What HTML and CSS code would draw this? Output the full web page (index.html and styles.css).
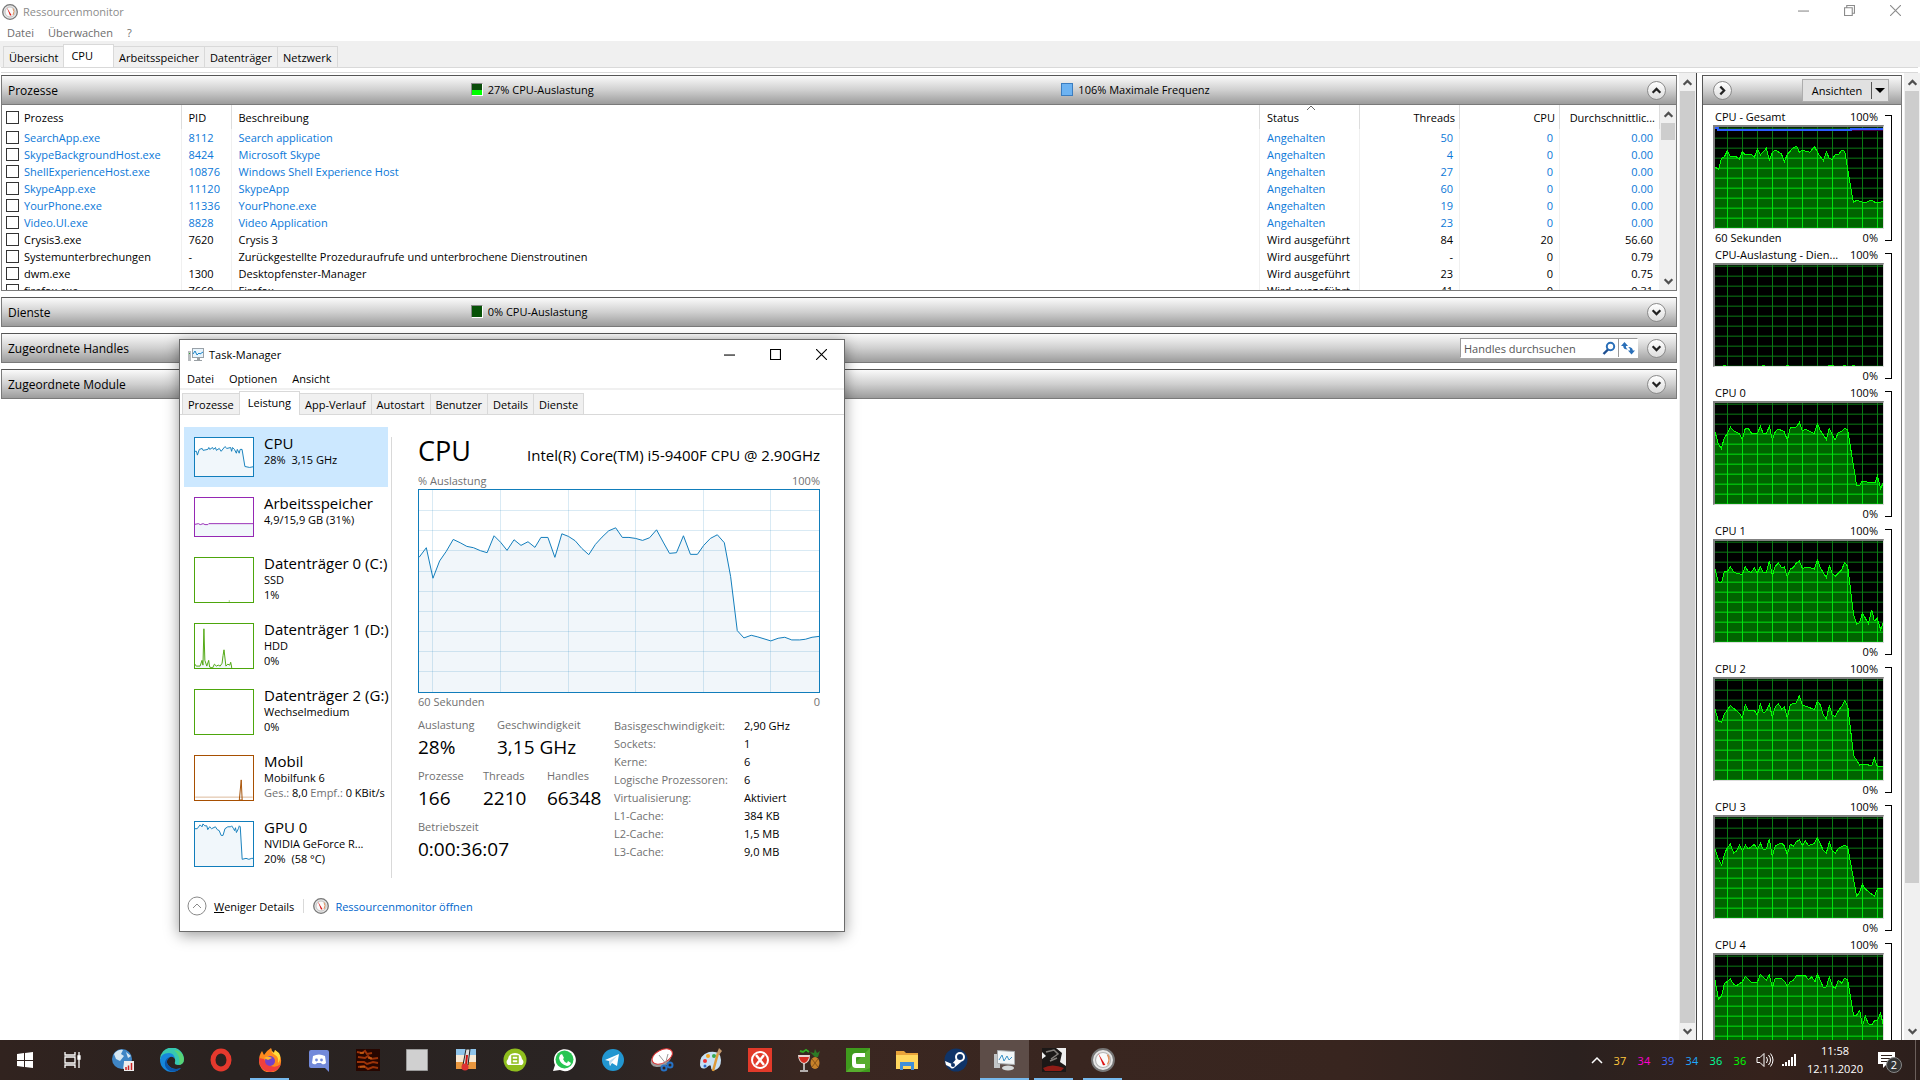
FILE: index.html
```html
<!DOCTYPE html>
<html lang="de">
<head>
<meta charset="utf-8">
<title>Ressourcenmonitor</title>
<link rel="stylesheet" href="styles.css">
</head>
<body>
<svg class="defs" aria-hidden="true">
  <defs>
    <pattern id="grid" x="36" y="32" width="45" height="30" patternUnits="userSpaceOnUse"><rect width="45" height="30" fill="#000"/><path d="M0 0h45v3H3v27H0z" fill="#0a7a14"/></pattern>
    <pattern id="load" x="36" y="32" width="45" height="30" patternUnits="userSpaceOnUse"><rect width="45" height="30" fill="#006400"/><path d="M0 0h45v3H3v27H0z" fill="#00e10f"/></pattern>
    <symbol id="gauge" viewBox="0 0 16 16"><circle cx="8" cy="8" r="7.3" fill="#e6e6e6" stroke="#777" stroke-width="1.3"/><circle cx="8" cy="8" r="5" fill="#fafafa" stroke="#b5b5b5" stroke-width=".8"/><path d="M4.8 3.5l4.8 7.8-1.6.2z" fill="#d11"/><path d="M11 4.500q2 3 0 6.500" fill="none" stroke="#e0915c"/></symbol>
    <symbol id="monitor" viewBox="0 0 16 16"><rect x="4.500" y="1.500" width="11" height="9" fill="#e8f4fc" stroke="#99a1a8"/><path d="M5 7l2-3 2 4 2-2 1 1 3-2" fill="none" stroke="#1b84c9"/><path d="M9 11h3v2h2v1H6v-1h3z" fill="#9aa0a4"/><path d="M0 4h3v10H0z" fill="#b8bcbf"/><path d="M1 6h1v1H1z" fill="#2ea22e"/></symbol>
    <symbol id="up" viewBox="0 0 10 10"><path d="M1.500 7L5 3.500 8.500 7" fill="none" stroke="currentColor" stroke-width="2"/></symbol>
    <symbol id="down" viewBox="0 0 10 10"><path d="M1.500 3L5 6.500 8.500 3" fill="none" stroke="currentColor" stroke-width="2"/></symbol>
    <symbol id="right" viewBox="0 0 10 10"><path d="M3 1.500L6.500 5 3 8.500" fill="none" stroke="currentColor" stroke-width="2"/></symbol>
  </defs>
</svg>

<main class="desktop">
  <section class="resmon">
    <header class="titlebar">
      <svg class="app-icon"><use href="#gauge"/></svg>
      <h1>Ressourcenmonitor</h1>
      <div class="controls">
        <button aria-label="Minimieren"><svg viewBox="0 0 10 10"><path d="M0 5.500h10"/></svg></button>
        <button aria-label="Wiederherstellen"><svg viewBox="0 0 10 10"><path d="M.5 2.500h7v7h-7zM2.500 2.500v-2h7v7h-2"/></svg></button>
        <button aria-label="Schließen"><svg viewBox="0 0 10 10"><path d="M0 0l10 10M10 0L0 10"/></svg></button>
      </div>
    </header>
    <nav class="menu"><button>Datei</button><button>Überwachen</button><button>?</button></nav>
    <div class="tabs"><button>Übersicht</button><button class="active">CPU</button><button>Arbeitsspeicher</button><button>Datenträger</button><button>Netzwerk</button></div>
    <div class="tab-edge"></div>
    <div class="body">
      <div class="panels">
        <section class="panel">
          <div class="panel-head">
            <h2>Prozesse</h2>
            <span class="meter"><i class="swatch busy"></i>27% CPU-Auslastung</span>
            <span class="meter"><i class="swatch freq"></i>106% Maximale Frequenz</span>
            <button class="round" aria-label="Einklappen"><svg><use href="#up"/></svg></button>
          </div>
          <div class="grid-wrap">
            <table class="procs">
              <colgroup><col class="c-name"><col class="c-pid"><col><col class="c-num"><col class="c-num"><col class="c-num"><col class="c-num"></colgroup>
              <thead><tr><th><label><input type="checkbox">Prozess</label></th><th>PID</th><th>Beschreibung</th><th class="sorted">Status<svg class="sort" viewBox="0 0 10 5"><path d="M1 5l4-4 4 4"/></svg></th><th class="num">Threads</th><th class="num">CPU</th><th class="num">Durchschnittlic...</th></tr></thead>
              <tbody>
                <tr class="paused"><td><label><input type="checkbox">SearchApp.exe</label></td><td>8112</td><td>Search application</td><td>Angehalten</td><td class="num">50</td><td class="num">0</td><td class="num">0.00</td></tr>
                <tr class="paused"><td><label><input type="checkbox">SkypeBackgroundHost.exe</label></td><td>8424</td><td>Microsoft Skype</td><td>Angehalten</td><td class="num">4</td><td class="num">0</td><td class="num">0.00</td></tr>
                <tr class="paused"><td><label><input type="checkbox">ShellExperienceHost.exe</label></td><td>10876</td><td>Windows Shell Experience Host</td><td>Angehalten</td><td class="num">27</td><td class="num">0</td><td class="num">0.00</td></tr>
                <tr class="paused"><td><label><input type="checkbox">SkypeApp.exe</label></td><td>11120</td><td>SkypeApp</td><td>Angehalten</td><td class="num">60</td><td class="num">0</td><td class="num">0.00</td></tr>
                <tr class="paused"><td><label><input type="checkbox">YourPhone.exe</label></td><td>11336</td><td>YourPhone.exe</td><td>Angehalten</td><td class="num">19</td><td class="num">0</td><td class="num">0.00</td></tr>
                <tr class="paused"><td><label><input type="checkbox">Video.UI.exe</label></td><td>8828</td><td>Video Application</td><td>Angehalten</td><td class="num">23</td><td class="num">0</td><td class="num">0.00</td></tr>
                <tr><td><label><input type="checkbox">Crysis3.exe</label></td><td>7620</td><td>Crysis 3</td><td>Wird ausgeführt</td><td class="num">84</td><td class="num">20</td><td class="num">56.60</td></tr>
                <tr><td><label><input type="checkbox">Systemunterbrechungen</label></td><td>-</td><td>Zurückgestellte Prozeduraufrufe und unterbrochene Dienstroutinen</td><td>Wird ausgeführt</td><td class="num">-</td><td class="num">0</td><td class="num">0.79</td></tr>
                <tr><td><label><input type="checkbox">dwm.exe</label></td><td>1300</td><td>Desktopfenster-Manager</td><td>Wird ausgeführt</td><td class="num">23</td><td class="num">0</td><td class="num">0.75</td></tr>
                <tr><td><label><input type="checkbox">firefox.exe</label></td><td>7660</td><td>Firefox</td><td>Wird ausgeführt</td><td class="num">41</td><td class="num">0</td><td class="num">0.31</td></tr>
              </tbody>
            </table>
            <div class="scroll inner"><svg><use href="#up"/></svg><div class="track"><div class="thumb short"></div></div><svg><use href="#down"/></svg></div>
          </div>
        </section>
        <section class="panel"><div class="panel-head"><h2>Dienste</h2><span class="meter"><i class="swatch idle"></i>0% CPU-Auslastung</span><span></span><button class="round" aria-label="Ausklappen"><svg><use href="#down"/></svg></button></div></section>
        <section class="panel"><div class="panel-head"><h2>Zugeordnete Handles</h2><span></span>
          <form class="search"><input type="text" placeholder="Handles durchsuchen" aria-label="Handles durchsuchen"><button type="button" aria-label="Suchen"><svg viewBox="0 0 14 14"><circle cx="8.500" cy="5.500" r="3.700" fill="none" stroke="#2a6fb8" stroke-width="2"/><path d="M6 8.500L1.500 13" stroke="#1e4f91" stroke-width="2.400"/></svg></button><button type="button" class="refresh" aria-label="Aktualisieren"><svg viewBox="0 0 14 14"><path d="M0 5l3.500-4L7 5H4.800q0 2.500 2 3.500Q2.200 8.500 2.200 5zM14 9.500l-3.500 4-3.500-4h2.200q0-2.500-2-3.500 4.600 0 4.600 3.500z" fill="#2a6fb8"/></svg></button></form>
          <button class="round" aria-label="Ausklappen"><svg><use href="#down"/></svg></button></div></section>
        <section class="panel"><div class="panel-head"><h2>Zugeordnete Module</h2><span></span><span></span><button class="round" aria-label="Ausklappen"><svg><use href="#down"/></svg></button></div></section>
      </div>
      <div class="scroll"><svg><use href="#up"/></svg><div class="track"><div class="thumb full"></div></div><svg><use href="#down"/></svg></div>
      <aside class="views">
        <div class="views-box">
          <div class="panel-head views-head"><button class="round" aria-label="Ausblenden"><svg><use href="#right"/></svg></button><button class="views-btn"><span>Ansichten</span><i></i></button></div>
          <div class="charts">
            <figure class="chart"><figcaption><span>CPU - Gesamt</span><b>100%</b></figcaption><svg viewBox="0 0 504 303" preserveAspectRatio="none"><rect width="504" height="303" fill="url(#grid)"/><path class="load" d="M-9 320V120L0 120 11 128 19 94 28 90 37 72 45 88 65 90 73 97 82 74 91 84 109 83 118 91 127 66 136 84 154 64 163 100 172 76 181 69 199 80 208 104 217 82 235 62 245 58 253 76 262 70 285 76 298 58 311 82 325 101 334 74 343 94 352 97 361 82 371 82 380 70 389 73 415 226 425 220 451 228 468 219 480 226 520 224V320z"/><path d="M408 9h96" stroke="#400040" stroke-width="6"/><path d="M0 4h10v5h398V5h96" fill="none" stroke="#2b5cff" stroke-width="6"/></svg><footer><span>60 Sekunden</span><b>0%</b></footer></figure>
            <figure class="chart"><figcaption><span>CPU-Auslastung - Dien...</span><b>100%</b></figcaption><svg viewBox="0 0 504 303" preserveAspectRatio="none"><rect width="504" height="303" fill="url(#grid)"/><path d="M25 301h9M142 301h9M214 301h9M340 301h18M385 301h9M412 301h9" stroke="#0f0" stroke-width="3"/></svg><footer><span></span><b>0%</b></footer></figure>
            <figure class="chart"><figcaption><span>CPU 0</span><b>100%</b></figcaption><svg viewBox="0 0 504 303" preserveAspectRatio="none"><rect width="504" height="303" fill="url(#grid)"/><path class="load" d="M-9 320V86L0 86 9 120 19 137 28 104 37 92 46 72 56 84 73 92 82 110 91 76 100 76 109 90 127 92 136 70 145 92 154 92 163 70 172 110 181 86 190 78 208 86 217 112 226 74 244 72 253 58 262 84 271 78 298 92 307 62 316 82 334 110 343 76 360 112 370 88 380 86 389 76 398 80 425 248 434 248 442 234 460 238 480 240 487 218 497 258 504 240 520 240V320z"/></svg><footer><span></span><b>0%</b></footer></figure>
            <figure class="chart"><figcaption><span>CPU 1</span><b>100%</b></figcaption><svg viewBox="0 0 504 303" preserveAspectRatio="none"><rect width="504" height="303" fill="url(#grid)"/><path class="load" d="M-9 320V83L0 83 10 124 20 124 28 92 37 92 46 77 56 92 65 98 82 100 91 77 100 92 109 94 118 80 127 96 136 77 145 94 154 94 163 60 172 104 181 76 190 66 200 80 208 78 217 108 226 84 235 80 244 66 253 60 262 82 280 78 298 84 307 56 316 80 334 110 343 74 352 98 361 106 370 96 380 86 389 65 398 76 416 222 425 250 434 245 442 215 460 248 470 206 478 240 487 232 497 266 504 246 520 246V320z"/></svg><footer><span></span><b>0%</b></footer></figure>
            <figure class="chart"><figcaption><span>CPU 2</span><b>100%</b></figcaption><svg viewBox="0 0 504 303" preserveAspectRatio="none"><rect width="504" height="303" fill="url(#grid)"/><path class="load" d="M-9 320V90L0 90 10 126 20 130 28 106 37 92 46 80 56 88 73 102 82 118 91 78 100 96 118 94 127 108 136 76 145 102 154 96 163 76 172 114 181 84 190 74 200 90 208 84 217 118 226 76 244 72 253 50 262 78 280 84 298 92 307 66 316 78 325 108 334 120 343 80 352 110 361 112 370 96 380 82 389 66 398 80 416 230 434 258 451 256 470 260 478 238 487 262 504 262 520 262V320z"/></svg><footer><span></span><b>0%</b></footer></figure>
            <figure class="chart"><figcaption><span>CPU 3</span><b>100%</b></figcaption><svg viewBox="0 0 504 303" preserveAspectRatio="none"><rect width="504" height="303" fill="url(#grid)"/><path class="load" d="M-9 320V96L0 96 9 122 20 144 28 112 37 92 46 82 56 108 65 102 73 84 82 102 91 84 100 96 118 82 127 98 136 78 145 98 154 96 163 66 172 118 181 86 200 78 208 86 217 112 226 82 235 88 244 74 253 69 262 86 271 72 280 86 298 80 307 62 325 100 334 108 343 76 352 102 361 108 370 94 389 84 398 90 425 238 434 226 442 200 451 216 478 238 487 216 504 214 520 214V320z"/></svg><footer><span></span><b>0%</b></footer></figure>
            <figure class="chart"><figcaption><span>CPU 4</span><b>100%</b></figcaption><svg viewBox="0 0 504 303" preserveAspectRatio="none"><rect width="504" height="303" fill="url(#grid)"/><path class="load" d="M-9 320V74L0 74 10 132 20 122 28 86 46 72 56 88 65 92 82 80 91 64 109 82 127 82 136 58 154 76 163 60 172 98 181 70 200 72 208 78 217 94 226 80 235 76 244 62 262 60 271 62 280 74 290 66 300 80 307 56 325 98 334 96 343 66 352 94 361 100 370 76 380 84 389 70 398 74 416 182 425 180 434 166 442 214 451 184 460 206 470 210 478 198 487 196 497 174 504 208 520 208V320z"/></svg><footer><span></span><b>0%</b></footer></figure>
          </div>
        </div>
      </aside>
      <div class="scroll outer"><svg><use href="#up"/></svg><div class="track"><div class="thumb part"></div></div><svg><use href="#down"/></svg></div>
    </div>
  </section>

  <section class="taskman">
    <header class="titlebar">
      <svg class="app-icon"><use href="#monitor"/></svg>
      <h1>Task-Manager</h1>
      <div class="controls">
        <button aria-label="Minimieren"><svg viewBox="0 0 10 10"><path d="M0 5.500h10"/></svg></button>
        <button aria-label="Maximieren"><svg viewBox="0 0 10 10"><path d="M.5.5h9v9h-9z"/></svg></button>
        <button aria-label="Schließen"><svg viewBox="0 0 10 10"><path d="M0 0l10 10M10 0L0 10"/></svg></button>
      </div>
    </header>
    <nav class="menu"><button>Datei</button><button>Optionen</button><button>Ansicht</button></nav>
    <div class="tabs"><button>Prozesse</button><button class="active">Leistung</button><button>App-Verlauf</button><button>Autostart</button><button>Benutzer</button><button>Details</button><button>Dienste</button></div>
    <div class="perf">
      <ul class="devices">
        <li class="selected"><svg class="thumbnail blue" viewBox="0 0 60 40"><path d="M-2 42V14h3l1 4 2-6 3-1 1 2 5-1 1-2 1 2 3-2 1 2 2-2 1 3 3-2 2 3 4-5 2 2 4-1 1 4 1-4 2 2 2 4 1-4 2 4 1-4h2l3 18 5 1 5-1h5v15z"/></svg><div><h3>CPU</h3><p>28%&nbsp; 3,15 GHz</p></div></li>
        <li><svg class="thumbnail purple" viewBox="0 0 60 40"><path d="M-2 42V28l5-1 2 1 3-1 2 1h3l1-1h50v15z"/></svg><div><h3>Arbeitsspeicher</h3><p>4,9/15,9 GB (31%)</p></div></li>
        <li><svg class="thumbnail green" viewBox="0 0 60 46"><path d="M35 45h1"/></svg><div><h3>Datenträger 0 (C:)</h3><p>SSD</p><p>1%</p></div></li>
        <li><svg class="thumbnail green" viewBox="0 0 60 46"><path d="M-2 48V40l3 4h4l2-6 1 5 1-38 1 33 2 6 2-6 1 7 3 1 2-4 2 2 2-1 2 1 2-3 1-8 1-6 2 17 2-2 2 1 1-3 1 5v6z"/></svg><div><h3>Datenträger 1 (D:)</h3><p>HDD</p><p>0%</p></div></li>
        <li><svg class="thumbnail green" viewBox="0 0 60 46"></svg><div><h3>Datenträger 2 (G:)</h3><p>Wechselmedium</p><p>0%</p></div></li>
        <li><svg class="thumbnail brown" viewBox="0 0 60 46"><path d="M0 43h60" opacity=".4"/><path d="M46 46l2-21 1 21z"/></svg><div><h3>Mobil</h3><p>Mobilfunk 6</p><p><span>Ges.:</span> 8,0 <span>Empf.:</span> 0 KBit/s</p></div></li>
        <li><svg class="thumbnail blue" viewBox="0 0 60 46"><path d="M-2 48V7l4 0 3-4 2 2 1-3 2 2h2l1 4 2-3 2 2 4-2 2 3 2 1 2 5h2l2-7 3-2 3 0 1-1 2 3 1 2 1-3 1 5 2-4 1-3 1 1 2 34 4-1 3 1 3-1h3v14z"/></svg><div><h3>GPU 0</h3><p>NVIDIA GeForce R...</p><p>20%&nbsp; (58 °C)</p></div></li>
      </ul>
      <div class="detail">
        <div class="detail-head"><h2>CPU</h2><span>Intel(R) Core(TM) i5-9400F CPU @ 2.90GHz</span></div>
        <div class="axis"><span>% Auslastung</span><span>100%</span></div>
        <svg class="graph" viewBox="55 179 1204 609" preserveAspectRatio="none"><path class="area" d="M50 800V385L56 381 77 353 97 445 117 393 137 364 158 328 179 338 199 349 219 353 240 362 260 368 281 317 301 337 320 361 341 329 362 346 383 335 404 352 422 322 443 322 464 382 485 311 505 319 525 332 545 355 566 374 586 343 606 321 626 302 647 293 667 322 687 322 707 325 728 331 749 323 770 299 790 336 809 370 830 368 851 317 872 373 893 373 912 346 932 325 953 314 974 338 993 440 1013 603 1033 625 1055 617 1075 622 1114 634 1136 626 1156 623 1177 631 1201 631 1218 629 1238 623 1270 619V800z"/><path class="mesh" d="M97 179v609M301 179v609M505 179v609M706 179v609M910 179v609M1114 179v609M55 240h1204M55 301h1204M55 361h1204M55 424h1204M55 484h1204M55 544h1204M55 607h1204M55 667h1204M55 727h1204"/></svg>
        <div class="axis"><span>60 Sekunden</span><span>0</span></div>
        <div class="stats">
          <div class="big">
            <dl class="two"><div><dt>Auslastung</dt><dd>28%</dd></div><div><dt>Geschwindigkeit</dt><dd>3,15 GHz</dd></div></dl>
            <dl class="three"><div><dt>Prozesse</dt><dd>166</dd></div><div><dt>Threads</dt><dd>2210</dd></div><div><dt>Handles</dt><dd>66348</dd></div></dl>
            <dl><div><dt>Betriebszeit</dt><dd>0:00:36:07</dd></div></dl>
          </div>
          <table class="facts">
            <tr><th>Basisgeschwindigkeit:</th><td>2,90 GHz</td></tr>
            <tr><th>Sockets:</th><td>1</td></tr>
            <tr><th>Kerne:</th><td>6</td></tr>
            <tr><th>Logische Prozessoren:</th><td>6</td></tr>
            <tr><th>Virtualisierung:</th><td>Aktiviert</td></tr>
            <tr><th>L1-Cache:</th><td>384 KB</td></tr>
            <tr><th>L2-Cache:</th><td>1,5 MB</td></tr>
            <tr><th>L3-Cache:</th><td>9,0 MB</td></tr>
          </table>
        </div>
      </div>
    </div>
    <footer class="tm-foot"><button><svg class="fewer" viewBox="0 0 20 20"><circle cx="10" cy="10" r="9"/><path d="M6 12l4-4 4 4"/></svg><span><u>W</u>eniger Details</span></button><a href="#"><svg class="app-icon"><use href="#gauge"/></svg>Ressourcenmonitor öffnen</a></footer>
  </section>
</main>

<footer class="taskbar">
  <button aria-label="Start"><svg viewBox="0 0 24 24"><path fill="#fff" d="M4 6l7-1v7H4zM12 5l8-1v8h-8zM4 13h7v6l-7-1zM12 13h8v7l-8-1z"/></svg></button>
  <button aria-label="Taskansicht"><svg viewBox="0 0 24 24" fill="none" stroke="#fff" stroke-width="1.300"><path d="M3 4v3h10V4M3 20v-3h10v3M3 9h10v6H3zM17 4v16"/><path d="M16 8h2v3h-2z" fill="#fff"/></svg></button>
  <button aria-label="Netzwerk"><svg viewBox="0 0 24 24"><circle cx="11" cy="11" r="10" fill="#3f86c6"/><path d="M3 6q4-5 9-4l-2 4 3 2-4 5-4-2zM13 14l6-1-2 6-5 2zM15 4l5 4-3 2z" fill="#d7e8f3"/><path d="M13 13h10v10H13z" fill="#eee"/><path d="M15 19v3M17.500 17.500V22M20.500 15v7" stroke="#c22" stroke-width="1.500"/></svg></button>
  <button aria-label="Edge"><svg viewBox="0 0 24 24"><path d="M0 12A12 12 0 0 1 24 11q0 6-6 6-4 0-3-3 1-5-4-6-7 0-11 4z" fill="#37c8b0"/><path d="M0 12Q1 5 9 5q5 0 6 6-2-3-5-2-5 3-2 8 5 6 13 3-4 4-9 4A12 12 0 0 1 0 12z" fill="#1687dc"/><path d="M10 9q-5 3-2 8 5 6 13 3-5 5-11 3-6-3-5-9 1-4 5-5z" fill="#0b56ab"/><path d="M14 2q9 1 10 9 0 5-5 6 2-9-5-15z" fill="#67d95e" opacity=".7"/></svg></button>
  <button aria-label="Opera"><svg viewBox="0 0 24 24"><ellipse cx="12" cy="12" rx="8" ry="9" fill="none" stroke="#e5392d" stroke-width="5"/></svg></button>
  <button class="running" aria-label="Firefox"><svg viewBox="0 0 24 24"><path d="M1 13Q1 7 4 3l2 4q2-4 7-7 0 3 3 5l1-3q7 6 6 12a11 11 0 0 1-22-1z" fill="#ff8a1e"/><path d="M1 13q1 10 11 11 9-1 11-8-5 4-10 2T6 11l-5-1z" fill="#f0403c"/><path d="M13 0q0 5 4 7t3 8q4-5 1-10l-4-3-1 3q-3-2-3-5z" fill="#ffdc3e"/><circle cx="12" cy="13" r="5" fill="#7442c8"/><path d="M6 10q4-3 8 0l-4 2z" fill="#ffb52e"/></svg></button>
  <button aria-label="Discord"><svg viewBox="0 0 24 24"><path d="M2 4q0-2 2-2h16q2 0 2 2v20l-4-4H4q-2 0-2-2z" fill="#7289da"/><path d="M6 8q6-3 12 0l1 7q-2 2-4 1l-1-1h-4l-1 1q-2 1-4-1z" fill="#fff"/><circle cx="9.500" cy="12" r="1.400" fill="#7289da"/><circle cx="14.500" cy="12" r="1.400" fill="#7289da"/></svg></button>
  <button aria-label="Spiel"><svg viewBox="0 0 24 24"><path fill="#260600" d="M0 1h24v22H0z"/><path d="M1 4l5 1 3-2 2 3 5-1M2 9l7 1 3-2 3 3 7-1M1 14h7l3 2 6-2 5 1M2 19l6-1 4 3 5-2 5 1" fill="none" stroke="#9c3308" stroke-width="2"/><path d="M4 5h4M12 10h4M4 19h5" stroke="#e67b1d"/></svg></button>
  <button aria-label="Fenster"><svg viewBox="0 0 24 24"><path fill="#d0d0d0" stroke="#999" d="M1.500 1.500h21v21h-21z"/></svg></button>
  <button aria-label="Temperatur"><svg viewBox="0 0 24 24"><path fill="#e8963e" d="M2 1h20v20H2z"/><path fill="#8fc4ea" d="M2 1h20v7H2z"/><path fill="#f7e9d5" d="M2 7h20v7H2z"/><path d="M9 17L12 1h4l-2 16z" fill="#ddd" stroke="#222"/><path d="M12 17l1-10" stroke="#c11" stroke-width="2"/><circle cx="11" cy="19" r="3.500" fill="#d33"/></svg></button>
  <button aria-label="Cloud"><svg viewBox="0 0 24 24"><circle cx="12" cy="12" r="11.500" fill="#8fbe1e"/><path d="M5 17q-3-3 0-6 1-6 7-6t7 6q3 3 0 6z" fill="#fff"/><path d="M9 8h6v7H9zM9 11.500h6" fill="none" stroke="#8fbe1e" stroke-width="1.500"/></svg></button>
  <button aria-label="WhatsApp"><svg viewBox="0 0 24 24"><path d="M1 23l2-6A11 11 0 1 1 8 22z" fill="#fff"/><circle cx="12.500" cy="11.500" r="9" fill="#27c552"/><path d="M8 7l2-1 2 4-1 1q1 3 4 4l1-2 3 2q-1 3-4 3-7-2-8-8z" fill="#fff"/></svg></button>
  <button aria-label="Telegram"><svg viewBox="0 0 24 24"><circle cx="12" cy="12" r="11" fill="#2296d0"/><path d="M4 12l14-6-2 12-5-3-2 3-1-5z" fill="#fff"/><path d="M8 13l8-5-6 7-1 3z" fill="#bcdcf0"/></svg></button>
  <button aria-label="Snipping Tool"><svg viewBox="0 0 24 24"><ellipse cx="11" cy="11" rx="11" ry="7" transform="rotate(-28 11 11)" fill="#9d9d9d"/><ellipse cx="12" cy="8.500" rx="11" ry="6.500" transform="rotate(-28 12 8)" fill="#fff" stroke="#d33"/><path d="M9 7l8 10M18 6l-3 11" stroke="#999"/><circle cx="14" cy="20" r="2.500" fill="none" stroke="#2672c5" stroke-width="2"/><circle cx="20" cy="17" r="2.500" fill="none" stroke="#2672c5" stroke-width="2"/></svg></button>
  <button aria-label="Paint"><svg viewBox="0 0 24 24"><path d="M1 17Q0 7 10 4q12-2 12 8 0 8-6 10-4 1-4-3t-5 1q-5 2-6-3z" fill="#c7e1f5"/><circle cx="6" cy="13" r="2" fill="#e33"/><circle cx="9" cy="8" r="2" fill="#f5a623"/><circle cx="15" cy="8" r="2" fill="#36a852"/><circle cx="6" cy="18" r="1.500" fill="#2b69c9"/><path d="M14 23l5-18" stroke="#dd9a38" stroke-width="2.500"/><path d="M18 5l2-5 3 3-3 4z" fill="#c69a6d"/></svg></button>
  <button aria-label="Beenden"><svg viewBox="0 0 24 24"><path fill="#e23a2a" d="M0 0h24v24H0z"/><circle cx="12" cy="12" r="8" fill="none" stroke="#fff" stroke-width="2"/><path d="M8 7l8 10M16 7L8 17" stroke="#fff" stroke-width="2.400"/></svg></button>
  <button aria-label="Cocktail"><svg viewBox="0 0 24 24"><ellipse cx="18" cy="15" rx="4.500" ry="6" fill="#c7822a"/><path d="M18 9l-5-5 4 1 1-4 2 4 3-2-2 6z" fill="#2d7a26"/><path d="M1 7h12q0 8-6 9-6-2-6-9z" fill="#e9d5d0"/><path d="M2 9h10q-1 5-5 6-4-1-5-6z" fill="#d42d21"/><path d="M7 15v7M3 23h8" stroke="#ddd" stroke-width="1.500"/><path d="M3 3l3 1 3-2 3 2" stroke="#3a2" stroke-width="2"/><path d="M15 11l6 8M21 11l-6 8" stroke="#8e5617"/></svg></button>
  <button aria-label="Camtasia"><svg viewBox="0 0 24 24"><path fill="#3f9b1d" d="M0 0h24v24H0z"/><path d="M24 0v20L14 24H0z" fill="#6cbb3c" opacity=".55"/><path d="M19 5H10Q6 5 6 9v7q0 4 4 4h9v-4h-8q-1 0-1-1V10q0-1 1-1h8z" fill="#fff"/></svg></button>
  <button aria-label="Explorer"><svg viewBox="0 0 24 24"><path d="M1 3h8l2 2h12v16H1z" fill="#e8a33a"/><path d="M1 7h22v14H1z" fill="#ffd75e"/><path d="M5 22v-8h14v8h-3v-4H8v4z" fill="#3f8fd8"/></svg></button>
  <button aria-label="Steam"><svg viewBox="0 0 24 24"><circle cx="12" cy="12" r="11.500" fill="#0f3468"/><path d="M1 13l7 3 5-6 4 4-6 5q-3 3-5 0l-4-2z" fill="#fff"/><circle cx="16" cy="9" r="4" fill="#0f3468" stroke="#fff" stroke-width="2"/><circle cx="9" cy="17" r="2" fill="#0f3468"/></svg></button>
  <button class="running current" aria-label="Task-Manager"><svg viewBox="0 0 24 24"><path fill="#c2c5c7" d="M1 6h6v14H1z"/><path fill="#f2f6f8" stroke="#a9adb0" d="M4.500 2.500l17 1v13l-17-1z"/><path d="M6 12l3-5 2 6 3-5 2 4 3-3" fill="none" stroke="#3a93c8"/><ellipse cx="15" cy="20" rx="6" ry="2.500" fill="#d6d9da"/></svg></button>
  <button class="running" aria-label="Crysis 3"><svg viewBox="0 0 24 24"><path fill="#eee" d="M0 0h24v24H0z"/><path d="M0 0h14l6 5-2 9 6 4v6H0V11l4-3-4-4z" fill="#1b1817"/><path d="M4 4l8-2 4 4-7 5M8 13l7-3" fill="none" stroke="#85807c" stroke-width="1.500"/><path d="M1 20q9-5 21 0l-3 3H3z" fill="#8e1c16"/></svg></button>
  <button class="running" aria-label="Ressourcenmonitor"><svg viewBox="0 0 24 24"><use href="#gauge" width="24" height="24"/></svg></button>
  <div class="tray">
    <svg class="chev" viewBox="0 0 12 12"><path d="M1 9l5-5 5 5"/></svg>
    <span class="t1">37</span><span class="t2">34</span><span class="t3">39</span><span class="t4">34</span><span class="t5">36</span><span class="t6">36</span>
    <svg class="speaker" viewBox="0 0 18 16"><path d="M1 5.500h3l4-4v13l-4-4H1zM10.500 5q2 3 0 6M12.500 3q4 5 0 10M14.500 1.500q5 6.500 0 13"/></svg>
    <svg class="signal" viewBox="0 0 15 12"><path d="M0 10h2v2H0zM3 8h2v4H3zM6 6h2v6H6zM9 3h2v9H9zM12 0h2v12h-2z"/></svg>
    <div class="clock"><time>11:58</time><time>12.11.2020</time></div>
    <button class="notes" aria-label="Benachrichtigungen"><svg viewBox="0 0 20 18"><path d="M1 1h17v12h-8l-4 4v-4H1z" fill="#fff"/><path d="M4 4.500h11M4 7.500h11M4 10.500h7" stroke="#2e211d"/></svg><b>2</b></button>
    <i class="peek"></i>
  </div>
</footer>
</body>
</html>
```
FILE: styles.css
```css
* { box-sizing: border-box; }
body { margin: 0; height: 100vh; display: flex; flex-direction: column; overflow: hidden; background: #fff; color: #000; font: 11px/17px "Open Sans", "Noto Sans", sans-serif; }
h1, h2, h3, p, ul, dl, dd, figure { margin: 0; padding: 0; font-weight: 400; }
b { font-weight: 400; }
button { font: inherit; color: inherit; border: 0; padding: 0; background: none; white-space: nowrap; }
input { font: inherit; }
svg { display: block; flex: none; }
.defs { position: absolute; width: 0; height: 0; }
.desktop { flex: 1; min-height: 0; position: relative; display: flex; }
.resmon { flex: 1; min-width: 0; display: flex; flex-direction: column; }

/* window frames */
.titlebar { display: flex; align-items: center; }
.titlebar h1 { flex: 1; font-size: 11px; }
.app-icon { width: 16px; height: 16px; }
.controls { display: flex; }
.controls button { width: 46px; display: grid; place-items: center; }
.controls svg { width: 11px; height: 11px; fill: none; stroke: currentColor; stroke-width: 1; }
.resmon > .titlebar { height: 23px; padding-left: 2px; gap: 5px; color: #8c8c8c; }
.resmon > .titlebar .controls { align-self: flex-start; padding: 5px 2px 0 0; }
.menu { display: flex; align-items: center; }
.resmon > .menu { height: 18px; padding-left: 7px; gap: 14px; color: #6d6d6d; }
.tabs { display: flex; align-items: flex-end; }
.tabs button { height: 21px; padding: 0 5px; background: #f0f0f0; border: 1px solid #d9d9d9; border-bottom: 0; margin-right: -1px; }
.tabs .active { background: #fff; height: 23px; padding-bottom: 2px; }
.resmon > .tabs { height: 26px; padding-left: 3px; background: #f0f0f0; flex: none; }
.resmon > .tabs .active { padding: 0 20px 2px 7px; }
.tab-edge { flex: none; height: 6px; border: solid #d9d9d9; border-width: 1px 0; background: #fff; margin: 0 2px 0 1px; }

/* resource monitor */
.body { flex: 1; min-height: 0; display: flex; }
.panels { flex: 1; min-width: 0; padding: 2px 2px 0 1px; display: flex; flex-direction: column; gap: 6px; }
.panel { border: 1px solid #7a7a7a; border-top-color: #555; }
.panel-head { height: 28px; display: grid; grid-template-columns: 463fr 591fr 586fr 19px; align-items: center; padding: 0 10px 0 6px; background: linear-gradient(#fafafa, #d0d0d0 50%, #9c9c9c); }
.panel-head h2 { font-size: 12px; }
.meter { display: flex; align-items: center; gap: 5px; padding-bottom: 2px; }
.swatch { width: 12px; height: 13px; border: 1px solid #fff; border-left-color: #888; border-top-color: #888; }
.busy { background: linear-gradient(#0a4d0a 50%, #0f0 50%); }
.idle { background: #075207; }
.freq { background: #6db3f2; border-color: #3b7dc0; }
.round { width: 19px; height: 19px; border: 1px solid #8b8b8b; border-radius: 50%; background: linear-gradient(#fff, #ddd); display: grid; place-items: center; color: #222; }
.round svg { width: 11px; height: 11px; }
.grid-wrap { height: 186px; overflow: hidden; display: flex; border-top: 1px solid #7a7a7a; }
.procs { flex: 1; min-width: 0; height: 0; border-collapse: collapse; table-layout: fixed; }
.c-name { width: 179px; }
.c-pid { width: 50px; }
.c-num { width: 100px; }
.procs th, .procs td { padding: 0 6px 0 7px; height: 17px; text-align: left; font-weight: 400; white-space: nowrap; border-right: 1px solid #f0f0f0; line-height: 17px; }
.procs th { height: 24px; border-right-color: #ddd; position: relative; }
.procs th:first-child, .procs td:first-child { padding: 0 0 0 4px; }
.procs .num { text-align: right; }
.procs th.num { padding: 0 4px; }
.procs label { display: flex; align-items: center; gap: 5px; }
.procs input { appearance: none; width: 13px; height: 13px; margin: 0; border: 1px solid #333; background: #fff; }
.sort { position: absolute; top: 0; left: 46px; width: 10px; height: 5px; fill: none; stroke: #666; }
.paused { color: #0b78d8; }
.scroll { width: 17px; flex: none; display: flex; flex-direction: column; align-items: center; background: #f0f0f0; color: #505050; padding: 4px 0 3px; gap: 3px; }
.inner, .outer { width: 16px; }
.scroll svg { width: 11px; height: 11px; }
.track { flex: 1; align-self: stretch; padding: 0 1px; }
.thumb { background: #cdcdcd; }
.short { height: 17px; }
.full { height: 100%; }
.part { height: 85%; }
.search { justify-self: end; margin-right: 19px; width: 178px; height: 20px; display: flex; background: #fff; border: 1px solid #999; border-right-color: #fff; border-bottom-color: #fff; }
.panel-head .search { margin-right: 9px; }
.search input { flex: 1; min-width: 0; border: 0; padding: 0 3px; background: none; outline: 0; }
.search input::placeholder { color: #555; opacity: 1; }
.search button { width: 19px; display: grid; place-items: center; }
.search button svg { width: 14px; height: 14px; }
.search .refresh { border-left: 1px solid #999; }
.views { width: 208px; flex: none; border-left: 1px solid #444; padding: 2px 2px 0 5px; overflow: hidden; }
.views-box { height: 100%; border: 1px solid #7a7a7a; border-color: #555 #7a7a7a #555 #555; border-bottom: 0; overflow: hidden; }
.views-head { display: flex; justify-content: space-between; padding: 0 12px 0 10px; border-bottom: 1px solid #7a7a7a; height: 29px; }
.views-btn { width: 87px; height: 23px; border: 1px solid #adadad; background: #e1e1e1; display: flex; align-items: center; }
.views-btn span { flex: 1; border-right: 1px solid #555; }
.views-btn i { margin: 0 3px; border: 5px solid transparent; border-top-color: #000; border-bottom: 0; }
.charts { padding: 3px 9px 0 10px; display: flex; flex-direction: column; gap: 1px; }
.chart { padding-right: 8px; position: relative; height: 137px; }
.chart::after { content: ""; position: absolute; right: 0; top: 7px; width: 6px; height: 124px; border: 1px solid #000; border-left: 0; }
.chart figcaption, .chart footer { display: flex; justify-content: space-between; padding: 0 3px 0 2px; margin-right: 3px; height: 17px; }
.chart > svg { width: 171px; height: 104px; border: 2px solid #808080; border-right: 1px solid #ddd; border-bottom: 1px solid #ddd; shape-rendering: crispEdges; }
.load { fill: url(#load); stroke: #0f0; stroke-width: 3; }

/* task manager */
.taskman { position: absolute; left: 179px; top: 339px; width: 666px; height: 593px; background: #fff; border: 1px solid #6b6b6b; box-shadow: 0 3px 14px rgba(0, 0, 0, .4); display: flex; flex-direction: column; }
.taskman > .titlebar { height: 29px; padding-left: 8px; gap: 5px; }
.taskman > .menu { height: 21px; padding-left: 7px; gap: 15px; border-bottom: 2px solid #f0f0f0; }
.taskman > .tabs { height: 25px; padding-left: 2px; border-bottom: 1px solid #d9d9d9; }
.taskman > .tabs .active { height: 24px; margin-bottom: -1px; padding: 0 8px 3px; }
.perf { flex: 1; display: flex; padding-top: 12px; }
.devices { width: 212px; flex: none; list-style: none; padding-left: 4px; position: relative; }
.devices::after { content: ""; position: absolute; right: 0; top: 10px; bottom: 3px; width: 1px; background: #d9d9d9; }
.devices li { display: flex; gap: 10px; padding: 10px 0 10px 10px; margin-right: 4px; line-height: 15px; white-space: nowrap; }
.devices li > div { width: 0; }
.selected { background: #cce8ff; }
.devices h3 { font-size: 15px; line-height: 18px; margin-top: -3px; }
.devices span { color: #707070; }
.thumbnail { width: 60px; height: 46px; border: 1px solid; background: #fff; }
.thumbnail path { stroke: currentColor; stroke-width: 1; fill: rgba(17, 125, 187, .06); }
.selected .thumbnail, .purple { height: 40px; }
.blue { color: #117dbb; }
.purple { color: #9528b4; }
.green { color: #4da60c; }
.brown { color: #a74f01; }
.detail { flex: 1; padding: 5px 24px 0 26px; }
.detail-head { display: flex; justify-content: space-between; align-items: baseline; height: 40px; line-height: 38px; font-size: 15px; }
.detail-head h2 { font-size: 27px; }
.axis { display: flex; justify-content: space-between; color: #707070; }
.graph { width: 402px; height: 204px; border: 1px solid #117dbb; }
.area { fill: #f1f6fa; stroke: #117dbb; stroke-width: 3; }
.mesh { fill: none; stroke: #117dbb; stroke-opacity: .16; stroke-width: 3; shape-rendering: crispEdges; }
.stats { display: flex; padding-top: 6px; }
.big { width: 196px; }
.big dl { display: grid; height: 51px; color: #707070; }
.two { grid-template-columns: 79px 1fr; }
.three { grid-template-columns: 65px 64px 1fr; }
.big dd { font-size: 19px; line-height: 29px; color: #000; }
.facts { border-collapse: collapse; height: 0; }
.facts th { width: 130px; text-align: left; font-weight: 400; color: #707070; }
.facts th, .facts td { padding: 0; height: 18px; line-height: 17px; white-space: nowrap; }
.tm-foot { height: 50px; display: flex; align-items: center; padding-left: 7px; }
.tm-foot button, .tm-foot a { display: flex; align-items: center; gap: 6px; }
.tm-foot button { padding-right: 9px; gap: 7px; border-right: 1px solid #d9d9d9; height: 14px; }
.tm-foot a { color: #0066cc; text-decoration: none; padding-left: 9px; }
.fewer { width: 20px; height: 20px; fill: none; stroke: #8a8a8a; }

/* taskbar */
.taskbar { height: 40px; flex: none; display: flex; background: linear-gradient(90deg, #31231f, #292220 12%, #2a2423 30%, #3a2721 42%, #38251f 70%, #2b211f 82%, #35221c 92%, #2c1f1c); color: #fff; }
.taskbar > button { width: 49px; display: grid; place-items: center; }
.taskbar > button svg { width: 24px; height: 24px; }
.running { box-shadow: inset 0 -2px #76b9ed; }
.taskbar > .running { margin: 0 5px; width: 39px; }
.taskbar > .current { margin: 0; width: 49px; background-color: #5d4d48; }
.tray { margin-left: auto; display: flex; align-items: center; }
.tray > span { width: 24px; text-align: center; }
.tray .chev { width: 12px; height: 12px; margin-right: 5px; fill: none; stroke: #fff; stroke-width: 1.5; }
.t1 { color: #ffc83d; }
.t2 { color: #ff00d4; }
.t3 { color: #4169ff; }
.t4 { color: #1fa8ff; }
.t5 { color: #00ff99; }
.t6 { color: #0f0; }
.speaker { width: 18px; height: 16px; margin: 0 8px 0 4px; fill: none; stroke: #fff; }
.signal { width: 15px; height: 12px; fill: #fff; margin-right: 10px; }
.clock { display: flex; flex-direction: column; align-items: center; line-height: 18px; }
.notes { position: relative; margin: 0 18px 0 14px; width: 20px; height: 18px; }
.notes svg { width: 20px; height: 18px; }
.notes b { position: absolute; left: 9px; top: 6px; width: 16px; height: 16px; line-height: 14px; border-radius: 50%; background: #333; border: 1px solid #888; }
.peek { width: 1px; height: 40px; background: #6b5f5b; margin-right: 4px; }
```
